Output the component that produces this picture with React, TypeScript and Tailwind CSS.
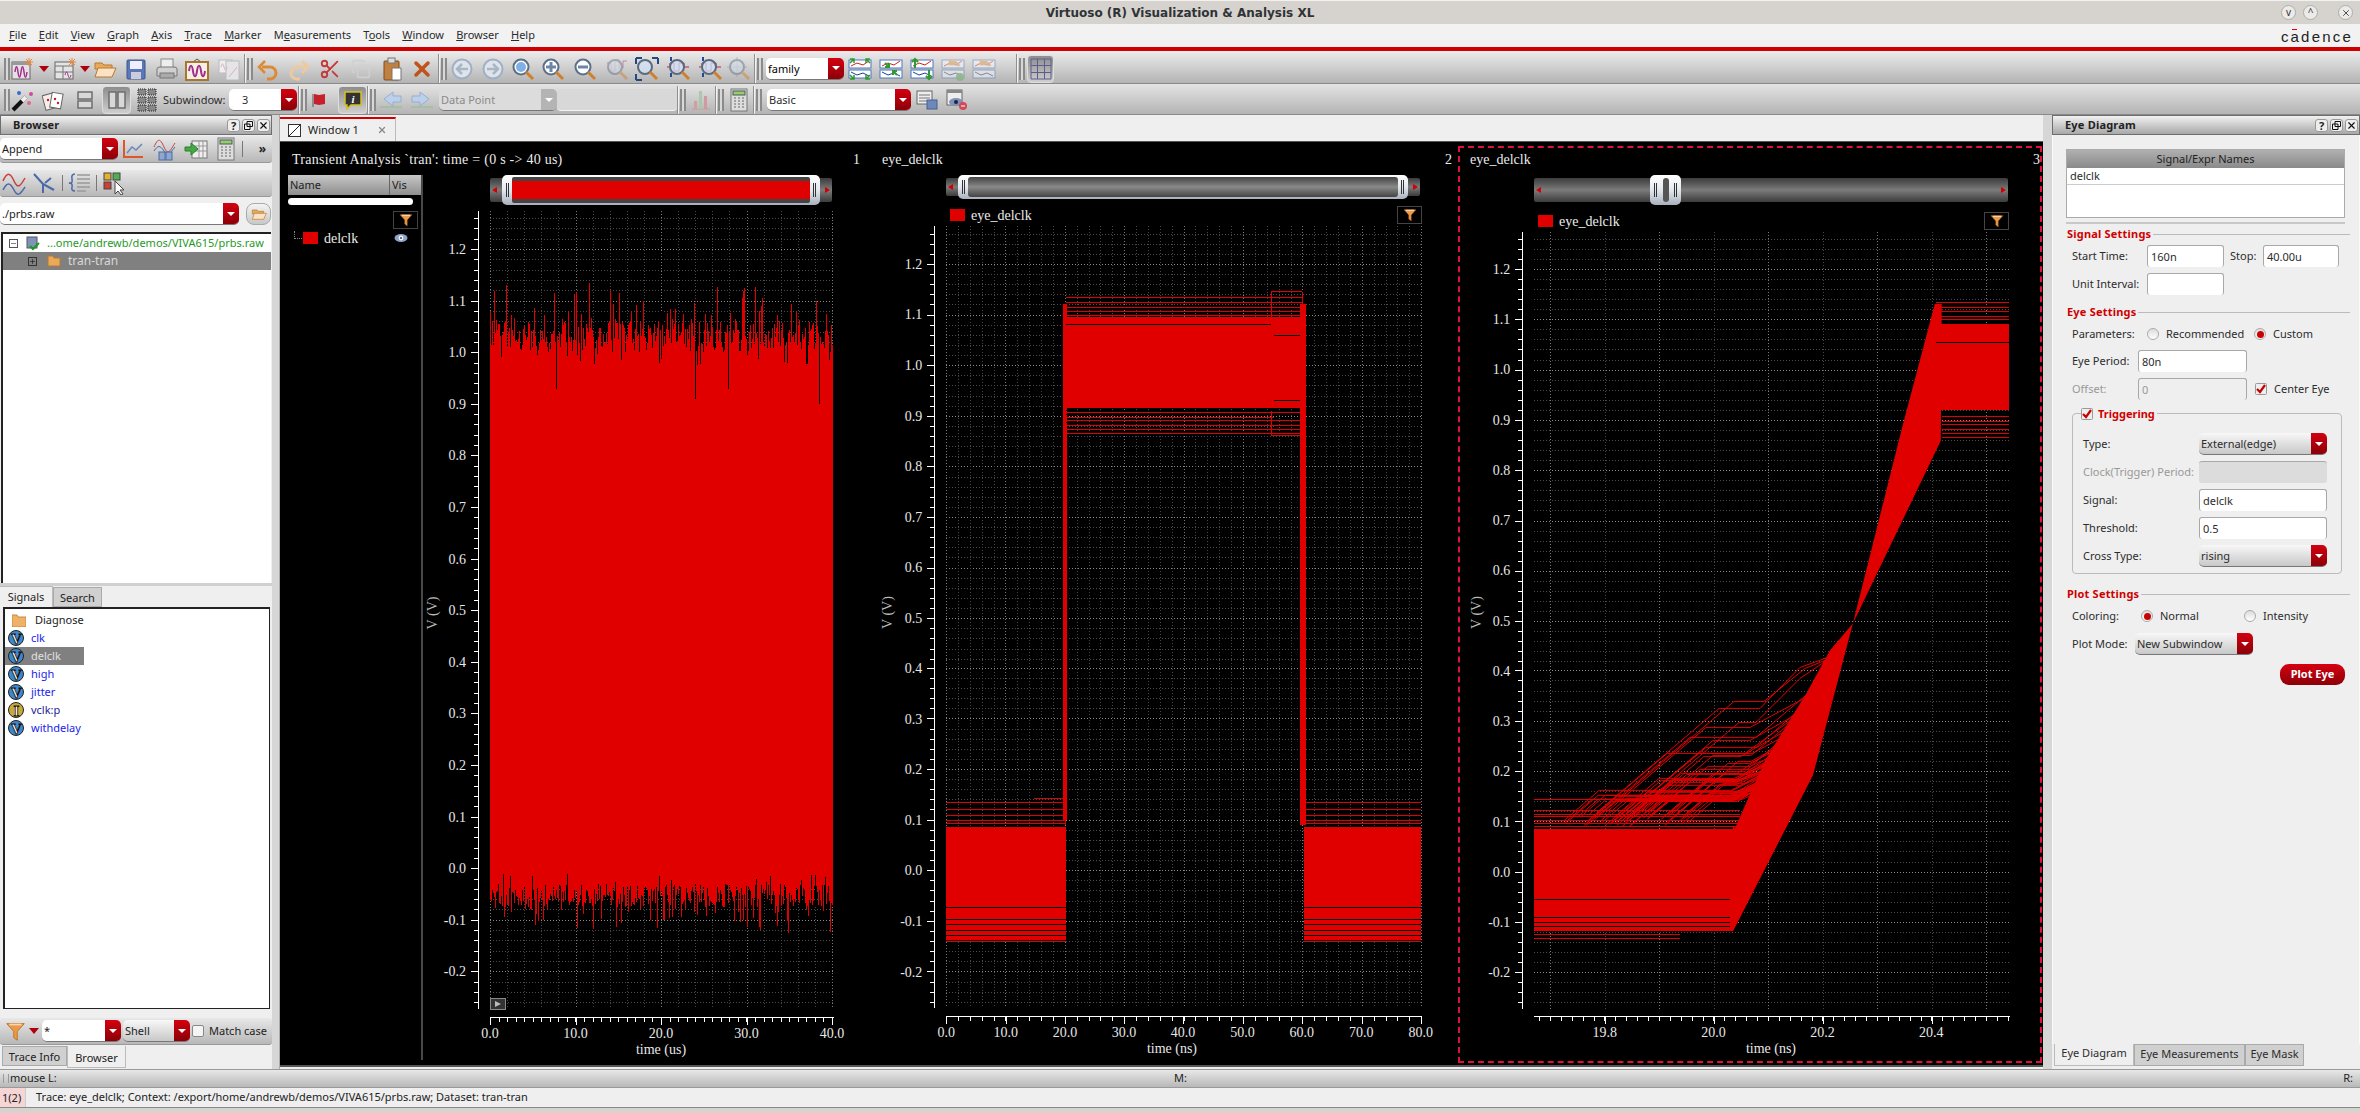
import type { ReactNode } from 'react';
import { Scissors, Copy, X, Minus, Plus } from 'lucide-react';

const RED = '#e00000';

function seeded(seed: number) {
  let a = seed;
  return () => {
    a = (a + 0x6d2b79f5) | 0;
    let t = Math.imul(a ^ (a >>> 15), 1 | a);
    t = (t + Math.imul(t ^ (t >>> 7), 61 | t)) ^ t;
    return ((t ^ (t >>> 14)) >>> 0) / 4294967296;
  };
}

/* ---------- small toolbar icons ---------- */

function Ic({ children, s = 24 }: { children: ReactNode; s?: number }) {
  return (
    <svg width={s} height={s} viewBox="0 0 24 24" fill="none" className="shrink-0">
      {children}
    </svg>
  );
}

const wave = 'M5 15c1-7 2-7 3 0s2 7 3 0 2-7 3 0 2 7 3 0';

function Spark() {
  return <path d="M19 1v8M15 5h8M16 2l6 6M22 2l-6 6" stroke="#e8873a" strokeWidth="1" />;
}
function NewWave() {
  return (
    <Ic>
      <rect x="2" y="5" width="18" height="17" fill="#e8dfe6" stroke="#666" />
      <rect x="2" y="5" width="18" height="3" fill="#999" />
      <path d={wave} stroke="#a0308a" strokeWidth="1.5" />
      <Spark />
    </Ic>
  );
}
function NewLayout() {
  return (
    <Ic>
      <rect x="2" y="5" width="18" height="17" fill="#e4e4e4" stroke="#666" />
      <path d="M2 9h18M2 15h18M10 9v13" stroke="#777" />
      <path d="M12 18c1-4 2-4 3 0s2 4 3 0" stroke="#a0308a" />
      <Spark />
    </Ic>
  );
}
function FolderOpen({ s = 24 }: { s?: number }) {
  return (
    <Ic s={s}>
      <path d="M2 6h7l2 2h8v4H2z" fill="#e8a95c" stroke="#b87a2c" />
      <path d="M2 20l3-9h18l-4 9z" fill="#f9e3c4" stroke="#b87a2c" />
    </Ic>
  );
}
function Save() {
  return (
    <Ic>
      <rect x="3" y="3" width="18" height="19" rx="1" fill="#5a78b8" stroke="#3d5590" />
      <rect x="6" y="4" width="12" height="8" fill="#eef" />
      <rect x="7" y="15" width="10" height="7" fill="#ccd" />
    </Ic>
  );
}
function Printer() {
  return (
    <Ic>
      <rect x="6" y="2" width="12" height="9" fill="#eee" stroke="#888" />
      <path d="M2 12q0-2 3-2h14q3 0 3 2v7H2z" fill="#d0d0d0" stroke="#777" />
      <rect x="5" y="16" width="14" height="5" fill="#aaa" stroke="#777" />
    </Ic>
  );
}
function WavePic() {
  return (
    <Ic>
      <path d="M8 5l4-3 4 3" stroke="#555" />
      <rect x="1" y="5" width="22" height="18" fill="#f6efe6" stroke="#a8762c" strokeWidth="2" />
      <path d="M4 14c1-7 3-7 4 0s3 7 4 0 3-7 4 0 3 7 4 0" stroke="#a0308a" strokeWidth="2" />
    </Ic>
  );
}
function DimWave() {
  return (
    <Ic>
      <rect x="2" y="3" width="13" height="13" fill="#eee" stroke="#bbb" />
      <rect x="9" y="4" width="13" height="19" fill="#e5e5e5" stroke="#bbb" />
      <path d="M4 10c1-4 2-4 3 0s2 4 3 0M12 20l8-10" stroke="#d6b0c8" />
    </Ic>
  );
}
function Undo({ flip, color }: { flip?: boolean; color: string }) {
  return (
    <Ic>
      <g transform={flip ? 'translate(24 0) scale(-1 1)' : undefined}>
        <path d="M6 10h8a5 5 0 0 1 0 12h-3" stroke={color} strokeWidth="3" />
        <path d="M9 4L3 10l6 6" stroke={color} strokeWidth="2.5" />
      </g>
    </Ic>
  );
}
function Paste() {
  return (
    <Ic>
      <rect x="4" y="4" width="15" height="19" rx="1" fill="#c08040" stroke="#7c4a1c" />
      <rect x="8" y="1" width="7" height="5" fill="#ddd" stroke="#777" />
      <path d="M12 11h9v12h-9z" fill="#fff" stroke="#777" />
    </Ic>
  );
}
function NavCircle({ right }: { right?: boolean }) {
  return (
    <Ic>
      <circle cx="12" cy="12" r="9.5" fill="#dfe4ea" stroke="#9fb0c6" strokeWidth="2" />
      <path d={right ? 'M6 12h10M12 7l5 5-5 5' : 'M18 12H8M12 7l-5 5 5 5'} stroke="#a9b6c6" strokeWidth="2.5" />
    </Ic>
  );
}
function Zoom({ children, dim }: { children?: ReactNode; dim?: boolean }) {
  return (
    <Ic>
      <g opacity={dim ? 0.45 : 1}>
        {children}
        <circle cx="10" cy="10" r="7" fill="#cfe2f6" fillOpacity="0.75" stroke="#5b6b7c" strokeWidth="2" />
        <path d="M15 15l7 7" stroke="#d0802c" strokeWidth="3" />
      </g>
    </Ic>
  );
}
function ZoomPlus({ kind }: { kind: 'in' | 'out' | 'fit' }) {
  return (
    <Ic>
      <circle cx="10" cy="10" r="7.5" fill="#fff" stroke="#5b7088" strokeWidth="2" />
      {kind !== 'fit' && <path d="M5 10h10" stroke="#6d86a6" strokeWidth="3" />}
      {kind === 'in' && <path d="M10 5v10" stroke="#6d86a6" strokeWidth="3" />}
      {kind === 'fit' && <circle cx="10" cy="10" r="5" fill="#7fb0e6" />}
      <path d="M15 15l7 7" stroke="#d0802c" strokeWidth="3" />
    </Ic>
  );
}
function Traces({ kind, dim }: { kind: number; dim?: boolean }) {
  return (
    <Ic>
      <g opacity={dim ? 0.45 : 1}>
        <rect x="1" y="3" width="22" height="8" fill="#fff" stroke="#4a76c0" />
        <rect x="1" y="13" width="22" height="8" fill="#fff" stroke="#4a76c0" />
        <path d="M3 9l6-3 6 2 6-4" stroke="#d02020" />
        <path d="M3 15l6 3 6-2 6 3" stroke="#1a3f9a" />
        {kind === 0 && <path d="M2 6l4-4M2 2h4v4M22 6l-4-4M22 2h-4v4M2 18l4 4M2 22h4v-4M22 18l-4 4M22 22h-4v-4" stroke="#2f9a2f" strokeWidth="1.5" />}
        {kind === 1 && <path d="M6 6l4 4M10 6v4H6M18 18l-4-4M14 18v-4h4" stroke="#2f9a2f" strokeWidth="2" />}
        {kind === 2 && <path d="M5 11V2M2 5l3-3 3 3M19 13v9M16 19l3 3 3-3" stroke="#2f9a2f" strokeWidth="2" />}
        {kind >= 3 && <path d="M18 9a6 6 0 0 0-9-3M9 2v5h5" stroke="#e09a48" strokeWidth="2.5" />}
        {kind === 3 && <circle cx="19" cy="20" r="4" fill="#5fae5f" />}
      </g>
    </Ic>
  );
}
function Calc() {
  return (
    <Ic>
      <rect x="4" y="1" width="16" height="22" fill="#ddd" stroke="#777" />
      <rect x="6" y="3" width="12" height="4" fill="#8fd06f" stroke="#555" />
      <path d="M7 10h2M11 10h2M15 10h2M7 13h2M11 13h2M15 13h2M7 16h2M11 16h2M15 16h2M7 19h2M11 19h2M15 19h2" stroke="#666" />
    </Ic>
  );
}
function Funnel({ s = 24 }: { s?: number }) {
  return (
    <Ic s={s}>
      <path d="M2 3h20l-8 9v10l-4-3v-7z" fill="#eb9a4a" stroke="#b86e22" />
      <path d="M5 4h14" stroke="#fbd7ae" strokeWidth="2" />
    </Ic>
  );
}
function Eye() {
  return (
    <svg width="14" height="10" viewBox="0 0 14 10" fill="none">
      <ellipse cx="7" cy="5" rx="6.5" ry="4" fill="#8ea4c8" />
      <circle cx="7" cy="5" r="2.4" fill="#f4f6fa" />
      <circle cx="7" cy="5" r="1.1" fill="#3d5590" />
    </svg>
  );
}
function Grip() {
  return <div className="w-[6px] h-[22px] shrink-0 border-x-2 border-[#8a8a8a] bg-[#d8d8d8] mx-[1px]" />;
}
function Sep() {
  return <div className="w-[2px] self-stretch shrink-0 bg-[#8f8f8f] border-r border-[#f2f2f2]" />;
}
function Slot({ w = 'w-[31px]', active, children }: { w?: string; active?: boolean; children?: ReactNode }) {
  return (
    <div
      className={`shrink-0 h-[28px] flex items-center justify-center rounded-[4px] ${w} ${
        active ? 'bg-linear-to-b from-[#8d8d8d] to-[#cfcfcf] border border-[#dedede]' : ''
      }`}
    >
      {children}
    </div>
  );
}
function DropArrow() {
  return (
    <svg width="10" height="6" viewBox="0 0 10 6" className="shrink-0">
      <path d="M0 0h10L5 6z" fill="#b00010" />
    </svg>
  );
}
function Combo({ text, w, dim, flat, indent }: { text?: string; w: string; dim?: boolean; flat?: boolean; indent?: boolean }) {
  return (
    <div
      className={`shrink-0 h-[22px] flex rounded-[5px] overflow-hidden border-b border-[#777] ${w} ${
        dim ? 'bg-[#dcdcdc] text-[#8a8a8a]' : flat ? 'bg-linear-to-b from-[#f8f8f8] to-[#c8c8c8]' : 'bg-white'
      }`}
    >
      <span className={`flex-1 leading-[21px] text-[11px] whitespace-nowrap overflow-hidden ${indent ? 'pl-[13px]' : 'pl-[2px]'}`}>{text}</span>
      <span
        className={`w-[16px] flex items-center justify-center ${
          dim ? 'bg-[#b4b4b4]' : 'bg-linear-to-b from-[#d40010] to-[#8c0008]'
        }`}
      >
        <span className="w-0 h-0 border-x-[4px] border-x-transparent border-t-[4px] border-t-white" />
      </span>
    </div>
  );
}

/* ---------- chrome ---------- */

const MENU: [string, number][] = [
  ['File', 0], ['Edit', 0], ['View', 0], ['Graph', 0], ['Axis', 0], ['Trace', 0], ['Marker', 0],
  ['Measurements', 1], ['Tools', 1], ['Window', 0], ['Browser', 0], ['Help', 0],
];

function TitleBar() {
  return (
    <div className="h-[24px] shrink-0 relative bg-[#d6d2ce] border-t border-[#f4f2f0] flex items-center justify-center">
      <span className="text-[12px] font-bold text-[#2e3436] font-['DejaVu_Sans',sans-serif]">Virtuoso (R) Visualization &amp; Analysis XL</span>
      <div className="absolute right-[7px] top-[4px] flex">
        {['v', '^'].map((c) => (
          <span key={c} className="w-[15px] h-[15px] mr-[7px] rounded-full bg-[#ecebe9] border border-[#b0aca8] text-[10px] leading-[13px] text-center text-[#333]">{c}</span>
        ))}
        <span className="w-[15px] h-[15px] ml-[13px] rounded-full bg-[#ecebe9] border border-[#b0aca8] flex items-center justify-center">
          <X size={10} color="#333" />
        </span>
      </div>
    </div>
  );
}

function MenuBar() {
  return (
    <div className="h-[23px] shrink-0 bg-[#f2f2f2] flex items-center pl-[9px] gap-[12.2px] relative text-[11px] text-[#2c2c2c]">
      {MENU.map(([m, u]) => (
        <span key={m}>
          {m.slice(0, u)}
          <u>{m[u]}</u>
          {m.slice(u + 1)}
        </span>
      ))}
      <span className="absolute right-[7px] top-[3px] text-[15px] leading-[20px] tracking-[2.2px] text-[#222] font-['Liberation_Sans',sans-serif]">cadence</span>
      <span className="absolute right-[63px] top-[5px] w-[5px] h-[1px] bg-[#e00000]" />
    </div>
  );
}

function ToolbarOne() {
  return (
    <div className="h-[33px] shrink-0 pt-[3px] flex items-center bg-linear-to-b from-[#ececec] to-[#b4b4b4] border-b border-[#8a8a8a] pl-[3px]">
      <Grip />
      <Slot w="w-[22px]"><NewWave /></Slot>
      <Slot w="w-[22px]"><DropArrow /></Slot>
      <Slot w="w-[20px]"><NewLayout /></Slot>
      <Slot w="w-[20px]"><DropArrow /></Slot>
      <Slot w="w-[20px]"><FolderOpen /></Slot>
      <Slot w="w-[42px]"><Save /></Slot>
      <Slot w="w-[20px]"><Printer /></Slot>
      <Slot w="w-[40px]"><WavePic /></Slot>
      <Slot w="w-[24px]"><DimWave /></Slot>
      <div className="w-[3px] shrink-0" />
      <Sep />
      <Grip />
      <Slot w="w-[28px]"><Undo color="#dd8a34" /></Slot>
      <Slot w="w-[34px]"><Undo flip color="#eec8a0" /></Slot>
      <Slot w="w-[28px]"><Scissors size={22} color="#c23a3a" className="shrink-0" /></Slot>
      <Slot w="w-[34px]"><Copy size={20} color="#d0d0d0" className="shrink-0" /></Slot>
      <Slot w="w-[28px]"><Paste /></Slot>
      <Slot w="w-[32px]"><X size={24} color="#c0521c" strokeWidth={3.5} className="shrink-0" /></Slot>
      <Sep />
      <Grip />
      <Slot w="w-[28px]"><NavCircle /></Slot>
      <Slot w="w-[34px]"><NavCircle right /></Slot>
      <Slot w="w-[26px]"><ZoomPlus kind="fit" /></Slot>
      <Slot w="w-[34px]"><ZoomPlus kind="in" /></Slot>
      <Slot w="w-[30px]"><ZoomPlus kind="out" /></Slot>
      <Slot w="w-[34px]"><Zoom dim><path d="M2 6h4v8h4V3h4v8h4V4h4" stroke="#c02060" /></Zoom></Slot>
      <Slot w="w-[26px]"><Zoom><path d="M1 1h6M1 1v6M23 1h-6M23 1v6M1 23h6M1 23v-6" stroke="#234a80" strokeWidth="2" /></Zoom></Slot>
      <Slot w="w-[38px]"><Zoom><path d="M0 10h3v-4h4v8h5V6h5v4h5" stroke="#c02060" /><path d="M4 0v4M4 16v4" stroke="#234a9a" strokeWidth="2" /></Zoom></Slot>
      <Slot w="w-[26px]"><Zoom><path d="M0 10h3v-4h4v8h5V6h5v4h5" stroke="#c02060" /><path d="M4 0v4M4 16v4" stroke="#234a9a" strokeWidth="2" /></Zoom></Slot>
      <Slot w="w-[30px]"><Zoom dim><path d="M10 0v20M0 10h20" stroke="#888" /></Zoom></Slot>
      <Sep />
      <Grip />
      <div className="w-[2px] shrink-0" />
      <Combo text="family" w="w-[78px]" />
      <Slot w="w-[32px]"><Traces kind={0} /></Slot>
      <Slot w="w-[30px]"><Traces kind={1} /></Slot>
      <Slot w="w-[32px]"><Traces kind={2} /></Slot>
      <Slot w="w-[30px]"><Traces kind={3} dim /></Slot>
      <Slot w="w-[32px]"><Traces kind={4} dim /></Slot>
      <div className="w-[16px] shrink-0" />
      <Sep />
      <Grip />
      <div className="w-[1px] shrink-0" />
      <Slot w="w-[27px]" active>
        <svg width="22" height="22" viewBox="0 0 22 22" fill="none" stroke="#5c5c8e" className="shrink-0">
          <path d="M1 1h20v20H1zM1 7.500h20M1 14.500h20M7.500 1v20M14.500 1v20" />
        </svg>
      </Slot>
    </div>
  );
}

function ToolbarTwo() {
  return (
    <div className="h-[31px] shrink-0 pt-[2px] flex items-center bg-linear-to-b from-[#e4e4e4] to-[#b4b4b4] border-b border-[#8a8a8a] pl-[3px] text-[11px] text-[#2c2c2c]">
      <Grip />
      <Slot w="w-[22px]">
        <Ic>
          <path d="M3 22L16 9" stroke="#111" strokeWidth="4" />
          <path d="M12 13l4-4" stroke="#eee" strokeWidth="4" />
          <circle cx="9" cy="5" r="2" fill="#3a6ad0" /><circle cx="21" cy="6" r="2" fill="#d04a9a" /><circle cx="19" cy="15" r="2" fill="#e06a8a" />
        </Ic>
      </Slot>
      <Slot w="w-[42px]">
        <Ic>
          <rect x="2" y="6" width="11" height="15" fill="#f4efe8" stroke="#666" transform="rotate(-15 8 14)" />
          <rect x="9" y="5" width="11" height="15" fill="#fff" stroke="#666" transform="rotate(10 14 12)" />
          <circle cx="13" cy="11" r="1.2" fill="#c02030" /><circle cx="16" cy="15" r="1.2" fill="#c02030" /><circle cx="6" cy="12" r="1.2" fill="#c02030" />
        </Ic>
      </Slot>
      <Slot w="w-[20px]">
        <svg width="16" height="18" viewBox="0 0 16 18" fill="#d8d8d8" stroke="#6e6e6e" strokeWidth="1.500" className="shrink-0">
          <rect x="1" y="1" width="14" height="7" /><rect x="1" y="10" width="14" height="7" />
        </svg>
      </Slot>
      <div className="w-[7px] shrink-0" />
      <Slot w="w-[29px]" active>
        <svg width="18" height="18" viewBox="0 0 18 18" fill="#d8d8d8" stroke="#6e6e6e" strokeWidth="1.500" className="shrink-0">
          <rect x="1" y="1" width="7" height="16" /><rect x="10" y="1" width="7" height="16" />
        </svg>
      </Slot>
      <Slot w="w-[32px]">
        <svg width="20" height="24" viewBox="0 0 20 24" fill="#888" stroke="#222" strokeDasharray="1 1" className="shrink-0">
          <rect x="1" y="1" width="8" height="6" /><rect x="11" y="1" width="8" height="6" />
          <rect x="1" y="9" width="8" height="6" /><rect x="11" y="9" width="8" height="6" />
          <rect x="1" y="17" width="8" height="6" /><rect x="11" y="17" width="8" height="6" />
        </svg>
      </Slot>
      <span className="w-[66px] shrink-0">Subwindow:</span>
      <Combo text="3" w="w-[68px]" indent />
      <div className="w-[1px] shrink-0" />
      <Sep />
      <Grip />
      <Slot w="w-[22px]">
        <svg width="14" height="14" viewBox="0 0 14 14" className="shrink-0"><path d="M1 1v13" stroke="#555" /><path d="M2 1l5 1 6-1v10l-6 1-5-1z" fill="#c8202a" /></svg>
      </Slot>
      <div className="w-[8px] shrink-0" />
      <Slot w="w-[29px]" active>
        <svg width="20" height="20" viewBox="0 0 20 20" className="shrink-0">
          <path d="M2 2h16v13H8l-4 4v-4H2z" fill="#333" stroke="#d8c020" strokeWidth="1.500" />
          <text x="10" y="13" fontSize="11" fontWeight="bold" fontStyle="italic" fill="#fff" textAnchor="middle" fontFamily="Liberation Serif, serif">i</text>
        </svg>
      </Slot>
      <Sep />
      <Grip />
      <Slot w="w-[28px]">
        <Ic><path d="M14 4v4h8v6h-8v4L5 11z" fill="#bdd0ea" stroke="#97afd0" /><path d="M1 19h22" stroke="#8cc08c" /></Ic>
      </Slot>
      <Slot w="w-[34px]">
        <Ic><path d="M10 4v4H2v6h8v4l9-7z" fill="#bdd0ea" stroke="#97afd0" /><path d="M1 19h22" stroke="#8cc08c" /></Ic>
      </Slot>
      <Combo text="Data Point" w="w-[118px]" dim />
      <div className="w-[120px] h-[22px] shrink-0 bg-[#d8d8d8] rounded-[4px] border-b border-[#f2f2f2]" />
      <Sep />
      <Grip />
      <Slot w="w-[28px]">
        <svg width="22" height="20" viewBox="0 0 22 20" className="shrink-0">
          <path d="M2 19h18" stroke="#d09a9a" /><rect x="4" y="11" width="3" height="8" fill="#d0a0a0" /><rect x="9" y="1" width="3" height="18" fill="#aac8aa" /><rect x="14" y="6" width="3" height="13" fill="#d09aa0" />
        </svg>
      </Slot>
      <Sep />
      <Grip />
      <Slot w="w-[28px]"><Calc /></Slot>
      <Sep />
      <Grip />
      <div className="w-[4px] shrink-0" />
      <Combo text="Basic" w="w-[144px]" />
      <Slot w="w-[32px]">
        <svg width="22" height="20" viewBox="0 0 22 20" className="shrink-0">
          <rect x="1" y="1" width="15" height="13" fill="#eee" stroke="#666" /><path d="M3 5h11M3 8h11M3 11h8" stroke="#777" /><rect x="11" y="10" width="10" height="9" fill="#6e88bc" stroke="#44608e" />
        </svg>
      </Slot>
      <Slot w="w-[28px]">
        <svg width="22" height="22" viewBox="0 0 22 22" className="shrink-0">
          <rect x="1" y="1" width="15" height="15" fill="#eee" stroke="#666" /><rect x="1" y="1" width="15" height="3" fill="#888" /><ellipse cx="10" cy="13" rx="7" ry="4" fill="#7f92b8" /><circle cx="10" cy="13" r="2" fill="#223" /><circle cx="17" cy="17" r="4" fill="#d04a5a" /><path d="M15 17h4" stroke="#fff" />
        </svg>
      </Slot>
    </div>
  );
}

function DockHead({ title }: { title: string }) {
  return (
    <div className="h-[20px] shrink-0 flex items-center bg-linear-to-b from-[#f2f2f2] to-[#a8a8a8] border border-[#6e6e6e] text-[11px] font-bold text-[#222]">
      <span className="ml-[12px] flex-1 tracking-[0.2px]">{title}</span>
      <span className="w-[13px] h-[13px] mr-[2px] rounded-[3px] border border-[#999] bg-[#eee] flex items-center justify-center text-[11px] leading-none">?</span>
      <span className="w-[13px] h-[13px] mr-[2px] rounded-[3px] border border-[#999] bg-[#eee] flex items-center justify-center">
        <svg width="9" height="9" viewBox="0 0 9 9" fill="none" stroke="#111"><path d="M3 .5h5.500v5H3zM.5 3H6v5.500H.5z" /></svg>
      </span>
      <span className="w-[13px] h-[13px] mr-[1px] rounded-[3px] border border-[#999] bg-[#eee] flex items-center justify-center">
        <X size={11} color="#111" strokeWidth={2.5} />
      </span>
    </div>
  );
}

/* ---------- left browser ---------- */

function SigIcon({ kind = 'V' }: { kind?: 'V' | 'I' }) {
  return (
    <svg width="16" height="16" viewBox="0 0 16 16" className="shrink-0">
      <circle cx="8" cy="8" r="7.500" fill={kind === 'V' ? '#3f87cc' : '#c8a838'} stroke="#222" />
      <text x="8.500" y="13.500" textAnchor="middle" fontSize="15" fontWeight="bold" fontFamily="Liberation Serif, serif" fill="#fff" stroke="#111" strokeWidth="0.800">{kind}</text>
    </svg>
  );
}

const SIGNALS: { name: string; kind?: 'V' | 'I'; dark?: boolean; sel?: boolean }[] = [
  { name: 'clk' }, { name: 'delclk', sel: true }, { name: 'high' }, { name: 'jitter' },
  { name: 'vclk:p', kind: 'I', dark: true }, { name: 'withdelay' },
];

function LeftPanel() {
  return (
    <div className="w-[272px] shrink-0 flex flex-col bg-[#efefef] text-[11px] text-[#222]">
      <DockHead title="Browser" />
      <div className="h-[27px] shrink-0 mt-[1px] flex items-center bg-linear-to-b from-[#e8e8e8] to-[#b8b8b8] border-b border-[#999] rounded-b-[3px]">
        <Combo text="Append" w="w-[118px]" />
        <Slot w="w-[30px]">
          <Ic><path d="M3 3v17h19" stroke="#e0562c" strokeWidth="2" /><path d="M6 16l5-6 4 3 6-6" stroke="#6a86c0" strokeWidth="1.500" /></Ic>
        </Slot>
        <Slot w="w-[34px]">
          <Ic><path d="M1 10c4-9 6-9 10 0s6 4 11-4" stroke="#c84040" /><path d="M1 14c4-6 6-6 10 0s6 2 11-4" stroke="#4a6aa8" /><rect x="6" y="15" width="6" height="8" fill="#8fa8cc" stroke="#4a6aa8" /><rect x="13" y="15" width="6" height="8" fill="#8fa8cc" stroke="#4a6aa8" /></Ic>
        </Slot>
        <Slot w="w-[28px]">
          <Ic><rect x="8" y="4" width="15" height="17" fill="#eee" stroke="#777" /><path d="M8 9h15M8 14h15M15 4v17M19 4v17" stroke="#999" /><path d="M1 10h6V6l7 6-7 6v-4H1z" fill="#44aa44" stroke="#2a802a" /></Ic>
        </Slot>
        <Slot w="w-[32px]"><Calc /></Slot>
        <div className="w-[1px] h-[16px] bg-[#777]" />
        <span className="ml-auto mr-[6px] font-bold text-[12px]">»</span>
      </div>
      <div className="h-[27px] shrink-0 mt-[7px] flex items-center bg-linear-to-b from-[#e8e8e8] to-[#b8b8b8] border-b border-[#999] rounded-b-[3px] pl-[2px]">
        <Slot w="w-[24px]">
          <Ic><path d="M1 10c4-9 7-9 11 0s7 4 11-3" stroke="#c84040" strokeWidth="1.500" /><path d="M1 19c4-8 7-8 11 0s7 3 11-3" stroke="#4a6aa8" strokeWidth="1.500" /></Ic>
        </Slot>
        <Slot w="w-[36px]">
          <Ic><path d="M2 3l9 10v9M11 13l11 6M13 12l6-5" stroke="#4a6aa8" strokeWidth="2" /></Ic>
        </Slot>
        <div className="w-[1px] h-[16px] bg-[#777]" />
        <Slot w="w-[33px]">
          <Ic><path d="M7 3Q3 3 4 8t-3 4q4 0 3 4t3 4" stroke="#4a6aa8" strokeWidth="1.500" /><path d="M9 4h13M9 8h13M9 12h13M9 16h13M9 20h9" stroke="#999" strokeWidth="1.500" /></Ic>
        </Slot>
        <div className="w-[1px] h-[16px] bg-[#777]" />
        <Slot w="w-[36px]">
          <Ic><rect x="1" y="2" width="7" height="7" fill="#e8b030" stroke="#444" /><rect x="10" y="2" width="7" height="7" fill="#50b050" stroke="#444" /><rect x="1" y="11" width="7" height="7" fill="#d04030" stroke="#444" /><path d="M12 10v13l3-3 3 4 2-1-3-4h4z" fill="#fff" stroke="#444" /></Ic>
        </Slot>
      </div>
      <div className="h-[22px] shrink-0 mt-[6px] flex items-center justify-between pr-[1px]">
        <Combo text="./prbs.raw" w="w-[239px]" />
        <span className="w-[25px] h-[22px] flex items-center justify-center rounded-[8px] bg-linear-to-b from-[#f4f4f4] to-[#c8c8c8] border border-[#aaa]">
          <FolderOpen s={16} />
        </span>
      </div>
      <div className="h-[351px] shrink-0 mt-[7px] mx-[1px] bg-white border-l-2 border-t-2 border-[#222] pt-[1px]">
        <div className="h-[17px] flex items-center pl-[6px] text-[#1f9a1f] whitespace-nowrap">
          <span className="w-[9px] h-[9px] shrink-0 border border-[#555] mr-[8px] flex items-center justify-center"><Minus size={7} color="#222" /></span>
          <svg width="14" height="15" viewBox="0 0 14 15" className="mr-[7px] shrink-0"><rect x="1" y="1" width="10" height="11" fill="#7f92b8" stroke="#556" /><path d="M4 10l3 3 6-6" stroke="#1a9a1a" strokeWidth="2" fill="none" /></svg>
          ...ome/andrewb/demos/VIVA615/prbs.raw
        </div>
        <div className="h-[18px] flex items-center bg-[#808080] text-[#d8d8d8] pl-[25px] text-[12px]">
          <span className="w-[9px] h-[9px] border border-[#333] mr-[10px] flex items-center justify-center"><Plus size={7} color="#111" /></span>
          <svg width="14" height="12" viewBox="0 0 14 12" className="mr-[7px]"><path d="M1 1h5l1 2h6v8H1z" fill="#e8a95c" stroke="#b87a2c" /></svg>
          tran-tran
        </div>
      </div>
      <div className="h-[3px] shrink-0 bg-[#d0d0d0]" />
      <div className="h-[21px] shrink-0 flex items-end">
        <span className="w-[53px] h-[21px] text-center leading-[20px] bg-[#efefef] border-t border-r border-[#bbb]">Signals</span>
        <span className="w-[49px] h-[20px] text-center leading-[20px] bg-[#d0d0d0] border border-[#aaa]">Search</span>
      </div>
      <div className="h-[402px] shrink-0 ml-[3px] mr-[2px] bg-white border-l-2 border-t-2 border-[#222] border-r border-b text-[#2222ee] pt-[2px]">
        <div className="h-[18px] flex items-center pl-[6px] text-[#222]">
          <svg width="14" height="13" viewBox="0 0 14 13" className="mr-[9px] ml-[1px]"><path d="M0 1h5l1 2h8v10H0z" fill="#efb068" stroke="#c88a3c" /></svg>
          Diagnose
        </div>
        {SIGNALS.map((s) => (
          <div key={s.name} className={`h-[18px] flex items-center pl-[3px] w-[79px] whitespace-nowrap ${s.sel ? 'bg-[#808080] text-[#e0e0e0]' : s.dark ? 'text-[#22229a]' : ''}`}>
            <SigIcon kind={s.kind} />
            <span className="ml-[7px]">{s.name}</span>
          </div>
        ))}
      </div>
      <div className="h-[27px] shrink-0 mt-[9px] flex items-center bg-linear-to-b from-[#e8e8e8] to-[#b8b8b8] border-b border-[#999] rounded-[3px] pl-[5px]">
        <Funnel s={21} />
        <div className="w-[16px] flex justify-center"><DropArrow /></div>
        <Combo text="*" w="w-[79px]" />
        <div className="w-[2px]" />
        <Combo text="Shell" w="w-[67px]" flat />
        <span className="w-[12px] h-[12px] ml-[2px] bg-[#f4f4f4] border border-[#888] rounded-[2px]" />
        <span className="ml-[5px] whitespace-nowrap">Match case</span>
      </div>
      <div className="h-[22px] shrink-0 mt-[1px] flex">
        <span className="w-[65px] ml-[2px] h-[20px] text-center leading-[19px] bg-[#d0d0d0] border border-[#aaa]">Trace Info</span>
        <span className="w-[59px] text-center leading-[23px] bg-[#efefef] border border-t-0 border-[#bbb]">Browser</span>
      </div>
    </div>
  );
}

/* ---------- plots ---------- */

type AxesProps = {
  axisX: number; x0: number; x1: number; top: number; bottom: number;
  y: (v: number) => number;
  xMajor: [number, string][];
  gridStep: number; gridOrigin: number; gridEvery: number;
  tickStep: number; tickOrigin: number;
  xLabel: string; yLabelX: number; labelEnd: number; xLabelAt: number;
  children?: ReactNode;
};

function Axes(p: AxesProps) {
  const vs: number[] = [];
  for (let k = -20; k <= 70; k++) vs.push(k / 50);
  const gx: number[] = [];
  for (let g = p.gridOrigin; g <= p.x1 + 1; g += p.gridStep) gx.push(g);
  const tx: number[] = [];
  for (let t = p.tickOrigin; t <= p.x1 + 1; t += p.tickStep) tx.push(t);
  return (
    <>
      <g shapeRendering="crispEdges" strokeDasharray="1 2">
        {vs.map((v, i) => {
          const yy = Math.round(p.y(v));
          if (yy < p.top || yy > p.bottom) return null;
          const major = (i + 20) % 5 === 0;
          return <line key={i} x1={p.x0} x2={p.x1} y1={yy + 0.5} y2={yy + 0.5} stroke={major ? '#8a8a8a' : '#4c4c4c'} />;
        })}
        {gx.map((g, i) => (
          <line key={i} x1={Math.round(g) + 0.5} x2={Math.round(g) + 0.5} y1={p.top} y2={p.bottom} stroke={i % p.gridEvery === 0 ? '#7a7a7a' : '#484848'} />
        ))}
      </g>
      {p.children}
      <g shapeRendering="crispEdges" stroke="#fff">
        <line x1={p.axisX + 0.5} x2={p.axisX + 0.5} y1={p.top} y2={p.bottom} />
        {vs.map((v, i) => {
          const yy = Math.round(p.y(v));
          if (yy < p.top || yy > p.bottom) return null;
          const major = (i + 20) % 5 === 0;
          return <line key={i} x1={p.axisX - (major ? 7 : 4)} x2={p.axisX} y1={yy + 0.5} y2={yy + 0.5} />;
        })}
        <line x1={p.x0} x2={p.x1 + 1} y1={1016.5} y2={1016.5} />
        {tx.map((t, i) => (
          <line key={i} x1={Math.round(t) + 0.5} x2={Math.round(t) + 0.5} y1={1016} y2={1021} />
        ))}
        {p.xMajor.map(([x], i) => (
          <line key={i} x1={Math.round(x) + 0.5} x2={Math.round(x) + 0.5} y1={1016} y2={1024} />
        ))}
      </g>
      <g fill="#e8e8e8" fontSize="14" fontFamily="Liberation Serif, serif">
        {[12, 11, 10, 9, 8, 7, 6, 5, 4, 3, 2, 1, 0, -1, -2].map((k) => (
          <text key={k} x={p.labelEnd} y={p.y(k / 10) + 5} textAnchor="end">
            {(k / 10).toFixed(1)}
          </text>
        ))}
        {p.xMajor.map(([x, l]) => (
          <text key={l} x={x} y={1037} textAnchor="middle">{l}</text>
        ))}
        <text x={p.xLabelAt} y={1053} textAnchor="middle">{p.xLabel}</text>
        <text transform={`translate(${p.yLabelX} 612) rotate(-90)`} textAnchor="middle" fill="#bbb">V (V)</text>
      </g>
    </>
  );
}

const y1 = (v: number) => 248 + (1.2 - v) * 516;
const y2 = (v: number) => 263 + (1.2 - v) * 506;
const y3 = (v: number) => 268 + (1.2 - v) * 503;

function noisePaths() {
  const r = seeded(7);
  let red = '';
  let slit = '';
  for (let x = 490; x <= 832; x++) {
    const up = 1.0 + 0.06 * r() + (r() < 0.22 ? 0.08 * r() : 0);
    const dn = -0.03 - 0.045 * r() - (r() < 0.22 ? 0.06 * r() : 0);
    red += `M${x}.5 ${y1(up).toFixed(0)}V${y1(dn).toFixed(0)}`;
    if (r() < 0.09) slit += `M${x}.5 ${y1(up).toFixed(0)}V${y1(0.97 + 0.04 * r() - (r() < 0.15 ? 0.07 : 0)).toFixed(0)}`;
    if (r() < 0.07) slit += `M${x}.5 ${y1(dn).toFixed(0)}V${y1(-0.01 - 0.03 * r()).toFixed(0)}`;
  }
  return { red, slit };
}
const noise = noisePaths();

function hl(y: (v: number) => number, vs: number[], a: number, b: number) {
  return vs.map((v) => `M${a} ${Math.round(y(v)) + 0.5}H${b}`).join('');
}

const LOW_LINES = [0.135, 0.12, 0.11, 0.1, 0.093];
const LOW_SLITS = [-0.072, -0.096, -0.106, -0.118, -0.128, -0.138];
const HIGH_UP = [1.134, 1.124, 1.116, 1.107, 1.1];
const HIGH_DN = [0.908, 0.898, 0.891, 0.881, 0.874, 0.866];

function Plot1() {
  return (
    <svg viewBox="423 210 447 855" className="w-[447px] h-[855px] block">
      <Axes
        axisX={478} x0={490} x1={833} top={210} bottom={1008} y={y1}
        xMajor={[[490, '0.0'], [575.5, '10.0'], [661, '20.0'], [746.5, '30.0'], [832, '40.0']]}
        gridStep={17.1} gridOrigin={490} gridEvery={5} tickStep={8.55} tickOrigin={490}
        xLabel="time (us)" yLabelX={437} labelEnd={466} xLabelAt={661}
      >
        <path d={noise.red} stroke={RED} shapeRendering="crispEdges" />
        <path d={noise.slit} stroke="#000" shapeRendering="crispEdges" />
      </Axes>
      <rect x="490.500" y="997.500" width="15" height="11" fill="#333" stroke="#888" shapeRendering="crispEdges" />
      <path d="M495 1000l6 3-6 3z" fill="#bbb" />
    </svg>
  );
}

function LowBand({ a, b }: { a: number; b: number }) {
  return (
    <g shapeRendering="crispEdges">
      <rect x={a} y={y2(0.085)} width={b - a} height={y2(-0.142) - y2(0.085)} fill={RED} />
      <path d={hl(y2, LOW_LINES, a, b)} stroke={RED} />
      <path d={hl(y2, LOW_SLITS, a, b)} stroke="#000" />
    </g>
  );
}

function Plot2() {
  return (
    <svg viewBox="870 225 588 840" className="w-[588px] h-[840px] block">
      <Axes
        axisX={934} x0={946} x1={1421} top={225} bottom={1008} y={y2}
        xMajor={[[946, '0.0'], [1005.5, '10.0'], [1065, '20.0'], [1124, '30.0'], [1183, '40.0'], [1242.500, '50.0'], [1302, '60.0'], [1361.500, '70.0'], [1421, '80.0']]}
        gridStep={11.88} gridOrigin={946} gridEvery={5} tickStep={11.88} tickOrigin={946}
        xLabel="time (ns)" yLabelX={892} labelEnd={922} xLabelAt={1172}
      >
        <LowBand a={946} b={1066} />
        <LowBand a={1304} b={1421} />
        <g shapeRendering="crispEdges">
          <path d={`M1034 ${y2(0.142)}H1065V${y2(0.09)}`} stroke={RED} fill="none" />
          <rect x={1063} y={y2(1.12)} width={4} height={y2(0.1) - y2(1.12)} fill={RED} />
          <rect x={1066} y={y2(1.095)} width={240} height={y2(0.915) - y2(1.095)} fill={RED} />
          <path d={hl(y2, HIGH_UP, 1066, 1302)} stroke={RED} />
          <path d={hl(y2, HIGH_DN, 1066, 1302)} stroke={RED} />
          <path d={hl(y2, [1.082, 0.912, 0.903, 0.887], 1066, 1271)} stroke="#000" />
          <path d={`M1271.500 ${y2(1.08)}V${y2(1.145)}H1302.500V${y2(0.86)}H1271.500V${y2(0.91)}`} stroke={RED} fill="none" />
          <path d={hl(y2, [1.06, 0.932, 0.912, 0.897, 0.88], 1274, 1300)} stroke="#000" />
          <rect x={1300} y={y2(1.12)} width={6} height={y2(0.09) - y2(1.12)} fill={RED} />
        </g>
      </Axes>
    </svg>
  );
}

function eyeFan() {
  const r = seeded(21);
  let d = '';
  const line = (v1: number) => {
    const v0 = 0.09 + r() * 0.035;
    const xf = 1733 + (v1 - 0.14) * 160 + r() * 14 - 7;
    const xp = xf - 10 - r() * 70 * (v1 < 0.17 ? 2 : 1);
    const xs = xp - (y3(v0) - y3(v1)) / 0.85;
    const vm = v1 + 0.05 + r() * 0.04;
    d += `M${xs.toFixed(0)} ${y3(v0).toFixed(0)}L${xp.toFixed(0)} ${y3(v1).toFixed(0)}H${xf.toFixed(0)}L${(1797 + r() * 16).toFixed(0)} ${y3(vm).toFixed(0)}L${(1830 + r() * 8).toFixed(0)} ${y3(0.43).toFixed(0)}`;
  };
  [0.34, 0.325, 0.298, 0.288, 0.268, 0.262, 0.248, 0.236, 0.232, 0.22].forEach(line);
  for (let i = 0; i < 50; i++) line(0.14 + r() * r() * 0.12);
  return d;
}
const fan = eyeFan();

function Plot3() {
  return (
    <svg viewBox="1458 231 585 834" className="w-[585px] h-[834px] block">
      <Axes
        axisX={1522} x0={1534} x1={2009} top={231} bottom={1009} y={y3}
        xMajor={[[1604.5, '19.8'], [1713.5, '20.0'], [1822.5, '20.2'], [1931.5, '20.4']]}
        gridStep={54.5} gridOrigin={1550} gridEvery={2} tickStep={10.9} tickOrigin={1539}
        xLabel="time (ns)" yLabelX={1481} labelEnd={1510} xLabelAt={1771}
      >
        <g stroke={RED} fill="none">
          <path d={fan} />
        </g>
        <g shapeRendering="crispEdges">
          <rect x={1534} y={y3(0.085)} width={199} height={y3(-0.118) - y3(0.085)} fill={RED} />
          <path d={hl(y3, [0.144], 1534, 1733)} stroke={RED} />
          <path d={hl(y3, [0.122, 0.115, 0.11, 0.103, 0.097, 0.091], 1534, 1740)} stroke={RED} />
          <path d={hl(y3, [-0.124, -0.133], 1534, 1680)} stroke={RED} />
          <path d={hl(y3, [-0.055, -0.09, -0.1, -0.109], 1534, 1730)} stroke="#000" />
          <path d={hl(y3, HIGH_UP, 1936, 2009)} stroke={RED} />
          <path d={hl(y3, HIGH_DN, 1942, 2009)} stroke={RED} />
        </g>
        <polygon
          points="1733,931 1813,775 1853,623 1830,650 1807,692 1765,760 1735,828 1733,825"
          fill={RED}
        />
        <polygon points="1853,623 1902,428 1935,303 1942,303 1941,440" fill={RED} />
        <rect x={1936} y={y3(1.09)} width={73} height={y3(0.92) - y3(1.09)} fill={RED} shapeRendering="crispEdges" />
        <path d={hl(y3, [1.055], 1936, 2009)} stroke="#000" shapeRendering="crispEdges" />
      </Axes>
    </svg>
  );
}

/* ---------- plot chrome ---------- */

function Slider({ track, handle, inner }: { track: string; handle: string; inner: 'red' | 'grey' | 'stub' }) {
  return (
    <div className={`relative bg-linear-to-b from-[#3c3c3c] via-[#7c7c7c] to-[#3c3c3c] rounded-[2px] ${track}`}>
      <span className="absolute left-[2px] top-1/2 -mt-[3px] w-0 h-0 border-y-[3px] border-y-transparent border-r-[5px] border-r-[#d00000]" />
      <span className="absolute right-[2px] top-1/2 -mt-[3px] w-0 h-0 border-y-[3px] border-y-transparent border-l-[5px] border-l-[#d00000]" />
      <div className={`absolute -top-[3px] flex items-center justify-between px-[4px] rounded-[5px] bg-linear-to-b from-[#ffffff] via-[#e4e8ee] to-[#a8b0bc] ${handle}`}>
        <span className="w-[3px] h-[14px] border-x border-[#333]" />
        {inner === 'red' && (
          <span className="flex-1 mx-[3px] self-stretch my-[2px] rounded-[2px] bg-[#444] flex items-center">
            <span className="block w-full h-[18px] bg-[#e00000]" />
          </span>
        )}
        {inner === 'grey' && (
          <span className="flex-1 mx-[3px] self-stretch my-[2px] rounded-[3px] bg-linear-to-b from-[#444] via-[#8a8a8a] to-[#444]" />
        )}
        {inner === 'stub' && <span className="w-[6px] self-stretch my-[3px] rounded-[3px] bg-[#555]" />}
        <span className="w-[3px] h-[14px] border-x border-[#333]" />
      </div>
    </div>
  );
}

function FilterBtn() {
  return (
    <span className="w-[25px] h-[18px] flex items-center justify-center border border-[#444] bg-black">
      <Funnel s={14} />
    </span>
  );
}

function TitleRow({ title, n, nr, track }: { title: string; n: string; nr: string; track?: string }) {
  return (
    <div className={`h-[33px] shrink-0 flex items-start pt-[9px] justify-between font-['Liberation_Serif',serif] text-[14px] text-[#ececec] leading-[18px] ${nr}`}>
      <span className={`ml-[12px] whitespace-pre ${track ?? ''}`}>{title}</span>
      <span>{n}</span>
    </div>
  );
}

function Legend() {
  return (
    <div className="flex items-center justify-between pt-[6px]">
      <div className="flex items-center font-['Liberation_Serif',serif] text-[14px] text-[#ececec]">
        <span className="w-[15px] h-[12px] bg-[#e00000] ml-[4px] mr-[6px]" />
        eye_delclk
      </div>
      <FilterBtn />
    </div>
  );
}

function PlotArea() {
  return (
    <div className="flex-1 flex bg-black border-t border-[#555] border-b-2 mb-[2px] overflow-hidden">
      <div className="w-[590px] shrink-0 flex flex-col">
        <TitleRow title="Transient Analysis `tran': time = (0 s -> 40 us)" n="1" nr="pr-[10px]" track="tracking-[0.25px]" />
        <div className="flex flex-1">
          <div className="w-[135px] shrink-0 ml-[8px] mb-[6px] border-r-2 border-[#484848]">
            <div className="h-[20px] flex bg-linear-to-b from-[#c8c8c8] to-[#8e8e8e] text-[#222] leading-[20px]">
              <span className="w-[102px] pl-[2px] border-r border-[#666]">Name</span>
              <span className="pl-[2px]">Vis</span>
            </div>
            <div className="h-[7px] mt-[3px] w-[125px] rounded-full bg-white" />
            <div className="flex justify-end pr-[3px] mt-[6px]"><FilterBtn /></div>
            <div className="flex items-center pl-[6px] font-['Liberation_Serif',serif] text-[14px] text-[#ececec] h-[18px]">
              <span className="w-[8px] h-[8px] border-l border-b border-dotted border-[#888] -mt-[6px] mr-[1px]" />
              <span className="w-[15px] h-[12px] bg-[#e00000] mr-[6px]" />
              <span className="flex-1">delclk</span>
              <span className="mr-[13px] flex"><Eye /></span>
            </div>
          </div>
          <div className="w-[447px] shrink-0">
            <div className="h-[36px] pt-[3px] pl-[67px]">
              <Slider track="w-[342px] h-[24px]" handle="left-[12px] w-[318px] h-[30px]" inner="red" />
            </div>
            <Plot1 />
          </div>
        </div>
      </div>
      <div className="w-[588px] shrink-0 flex flex-col">
        <TitleRow title="eye_delclk" n="2" nr="pr-[6px]" />
        <div className="h-[24px] pt-[3px] pl-[76px]">
          <Slider track="w-[474px] h-[18px]" handle="left-[12px] w-[450px] h-[24px]" inner="grey" />
        </div>
        <div className="h-[27px] pl-[76px] pr-[36px]"><Legend /></div>
        <Plot2 />
      </div>
      <div className="relative w-[585px] shrink-0 flex flex-col">
        <TitleRow title="eye_delclk" n="3" nr="pr-[3px]" />
        <div className="h-[30px] pt-[3px] pl-[76px]">
          <Slider track="w-[474px] h-[24px]" handle="left-[116px] w-[31px] h-[30px]" inner="stub" />
        </div>
        <div className="h-[27px] pl-[76px] pr-[34px]"><Legend /></div>
        <Plot3 />
        <div className="absolute left-[0px] top-[4px] right-[1px] bottom-[2px] border-2 border-dashed border-[#e0103a] pointer-events-none" />
      </div>
    </div>
  );
}

function CenterPanel() {
  return (
    <div className="w-[1763px] shrink-0 flex flex-col bg-[#efefef] text-[11px]">
      <div className="h-[26px] shrink-0 relative">
        <div className="w-[116px] h-[24px] mt-[2px] border-t-[2px] border-t-[#d00000] border-r border-[#bbb] flex items-center text-[#222] pl-[8px]">
          <svg width="13" height="13" viewBox="0 0 13 13" className="mr-[7px]"><rect x=".5" y=".5" width="12" height="12" fill="#fff" stroke="#333" /><path d="M1 12L12 1" stroke="#222" /></svg>
          Window 1
          <X size={10} color="#888" strokeWidth={3} className="ml-[18px]" />
        </div>
      </div>
      <PlotArea />
    </div>
  );
}

/* ---------- right eye diagram dock ---------- */

function Field({ text, w, dim }: { text?: string; w: string; dim?: boolean }) {
  return (
    <span className={`h-[22px] shrink-0 rounded-[3px] border-t border-x border-[#a8a8a8] leading-[21px] pl-[3px] ${w} ${dim ? 'bg-[#efefef] text-[#999]' : 'bg-white'}`}>
      {text}
    </span>
  );
}
function Section({ title, top }: { title: string; top: string }) {
  return (
    <div className={`h-[16px] flex items-center ${top} font-bold text-[#d00000]`}>
      <span className="whitespace-nowrap tracking-[0.2px]">{title}</span>
      <span className="flex-1 h-[1px] bg-[#bbb] ml-[2px]" />
    </div>
  );
}
function Radio({ on }: { on?: boolean }) {
  return (
    <span className="w-[12px] h-[12px] shrink-0 rounded-full bg-linear-to-b from-[#ddd] to-white border border-[#aaa] flex items-center justify-center">
      {on && <span className="w-[7px] h-[7px] rounded-full bg-[#c80000]" />}
    </span>
  );
}
function Check() {
  return (
    <svg width="12" height="12" viewBox="0 0 12 12" className="shrink-0">
      <rect x=".5" y=".5" width="11" height="11" rx="1" fill="#eee" stroke="#999" />
      <path d="M2 6l3 3 5-7" stroke="#c80000" strokeWidth="2.200" fill="none" />
    </svg>
  );
}
function FormRow({ label, top, w, dim, children }: { label: string; top?: string; w: string; dim?: boolean; children?: ReactNode }) {
  return (
    <div className={`h-[22px] flex items-center ${top ?? ''}`}>
      <span className={`shrink-0 whitespace-nowrap ${w} ${dim ? 'text-[#999]' : ''}`}>{label}</span>
      {children}
    </div>
  );
}

function RightPanel() {
  return (
    <div className="w-[308px] shrink-0 flex flex-col bg-[#efefef] text-[11px] text-[#2c2c2c]">
      <DockHead title="Eye Diagram" />
      <div className="flex-1 flex flex-col border-x border-[#fafafa] pl-[8px] pr-[8px]">
        <div className="h-[69px] mt-[14px] ml-[5px] w-[279px] shrink-0 bg-white border border-[#aaa]">
          <div className="h-[18px] bg-linear-to-b from-[#b0b0b0] to-[#8a8a8a] text-center leading-[18px] text-[#222]">Signal/Expr Names</div>
          <div className="h-[17px] border-b border-[#ccc] pl-[3px] leading-[16px]">delclk</div>
        </div>
        <div className="h-[2px] mt-[4px] ml-[5px] w-[279px] shrink-0 bg-[#c8c8c8]" />
        <div className="ml-[6px] mr-[1px]">
          <Section title="Signal Settings" top="mt-[2px]" />
        </div>
        <div className="ml-[11px]">
          <FormRow label="Start Time:" w="w-[75px]" top="mt-[3px]">
            <Field text="160n" w="w-[77px]" />
            <span className="ml-[6px] w-[33px]">Stop:</span>
            <Field text="40.00u" w="w-[76px]" />
          </FormRow>
          <FormRow label="Unit Interval:" w="w-[75px]" top="mt-[6px]">
            <Field w="w-[77px]" />
          </FormRow>
        </div>
        <div className="ml-[6px] mr-[1px]">
          <Section title="Eye Settings" top="mt-[9px]" />
        </div>
        <div className="ml-[11px]">
          <FormRow label="Parameters:" w="w-[75px]" top="mt-[3px]">
            <Radio />
            <span className="ml-[7px] w-[88px]">Recommended</span>
            <Radio on />
            <span className="ml-[7px]">Custom</span>
          </FormRow>
          <FormRow label="Eye Period:" w="w-[66px]" top="mt-[5px]">
            <Field text="80n" w="w-[109px]" />
          </FormRow>
          <FormRow label="Offset:" w="w-[66px]" top="mt-[6px]" dim>
            <Field text="0" w="w-[109px]" dim />
            <span className="ml-[8px]"><Check /></span>
            <span className="ml-[7px]">Center Eye</span>
          </FormRow>
        </div>
        <div className="relative ml-[11px] mr-[9px] mt-[13px] border border-[#bbb] rounded-[4px] pt-[19px] pb-[6px] pl-[10px] pr-[9px] flex flex-col gap-[6px]">
          <div className="absolute -top-[8px] left-[8px] bg-[#efefef] flex items-center gap-[5px] pr-[2px] font-bold text-[#d00000]">
            <Check />
            Triggering
          </div>
          <FormRow label="Type:" w="w-[116px]"><Combo text="External(edge)" w="w-[128px]" flat /></FormRow>
          <FormRow label="Clock(Trigger) Period:" w="w-[116px]" dim>
            <span className="w-[128px] h-[22px] rounded-[3px] bg-[#dcdcdc] border-t border-[#aaa]" />
          </FormRow>
          <FormRow label="Signal:" w="w-[116px]"><Field text="delclk" w="w-[128px]" /></FormRow>
          <FormRow label="Threshold:" w="w-[116px]"><Field text="0.5" w="w-[128px]" /></FormRow>
          <FormRow label="Cross Type:" w="w-[116px]"><Combo text="rising" w="w-[128px]" flat /></FormRow>
        </div>
        <div className="ml-[6px] mr-[1px]">
          <Section title="Plot Settings" top="mt-[12px]" />
        </div>
        <div className="ml-[11px]">
          <FormRow label="Coloring:" w="w-[69px]" top="mt-[3px]">
            <Radio on />
            <span className="ml-[7px] w-[84px]">Normal</span>
            <Radio />
            <span className="ml-[7px]">Intensity</span>
          </FormRow>
          <FormRow label="Plot Mode:" w="w-[63px]" top="mt-[6px]">
            <Combo text="New Subwindow" w="w-[118px]" flat />
          </FormRow>
        </div>
        <div className="mt-[9px] flex justify-end pr-[6px]">
          <span className="w-[65px] h-[21px] rounded-[9px] bg-linear-to-b from-[#d80010] to-[#8c0008] text-white font-bold text-center leading-[20px] whitespace-nowrap">Plot Eye</span>
        </div>
      </div>
      <div className="h-[25px] shrink-0 flex pl-[2px] pb-[3px]">
        <span className="w-[80px] text-center leading-[18px] bg-[#efefef] border border-t-0 border-[#bbb]">Eye Diagram</span>
        <span className="w-[111px] text-center leading-[18px] bg-[#d0d0d0] border border-[#aaa]">Eye Measurements</span>
        <span className="w-[59px] text-center leading-[18px] bg-[#d0d0d0] border border-[#aaa]">Eye Mask</span>
      </div>
    </div>
  );
}

export default function App() {
  return (
    <div className="w-[2360px] h-[1113px] overflow-hidden flex flex-col bg-[#efefef] font-['Noto_Sans',sans-serif]">
      <TitleBar />
      <MenuBar />
      <div className="h-[4px] shrink-0 bg-[#d00000]" />
      <ToolbarOne />
      <ToolbarTwo />
      <div className="h-[954px] shrink-0 flex">
        <LeftPanel />
        <div className="w-[8px] shrink-0 bg-[#d6d6d6] border-r border-[#aaa]" />
        <CenterPanel />
        <div className="w-[9px] shrink-0 bg-[#d6d6d6]" />
        <RightPanel />
      </div>
      <div className="h-[19px] shrink-0 relative flex items-center bg-linear-to-b from-[#e8e8e8] to-[#b8b8b8] border-y border-[#999] text-[11px] text-[#222] pl-[3px]">
        <span className="w-[6px] h-[9px] border-x border-[#999] mr-[1px]" />
        <span>mouse L:</span>
        <span className="absolute left-[1174px]">M:</span>
        <span className="absolute right-[7px]">R:</span>
      </div>
      <div className="h-[20px] shrink-0 flex items-center bg-[#efefef] border-b border-[#888] text-[11px] text-[#222]">
        <span className="w-[26px] h-full bg-[#f6d5d5] pl-[2px] leading-[19px] border-r border-[#ccc]">1(2)</span>
        <span className="ml-[10px]">Trace: eye_delclk; Context: /export/home/andrewb/demos/VIVA615/prbs.raw; Dataset: tran-tran</span>
      </div>
      <div className="flex-1 bg-[#d6d2ce]" />
    </div>
  );
}
